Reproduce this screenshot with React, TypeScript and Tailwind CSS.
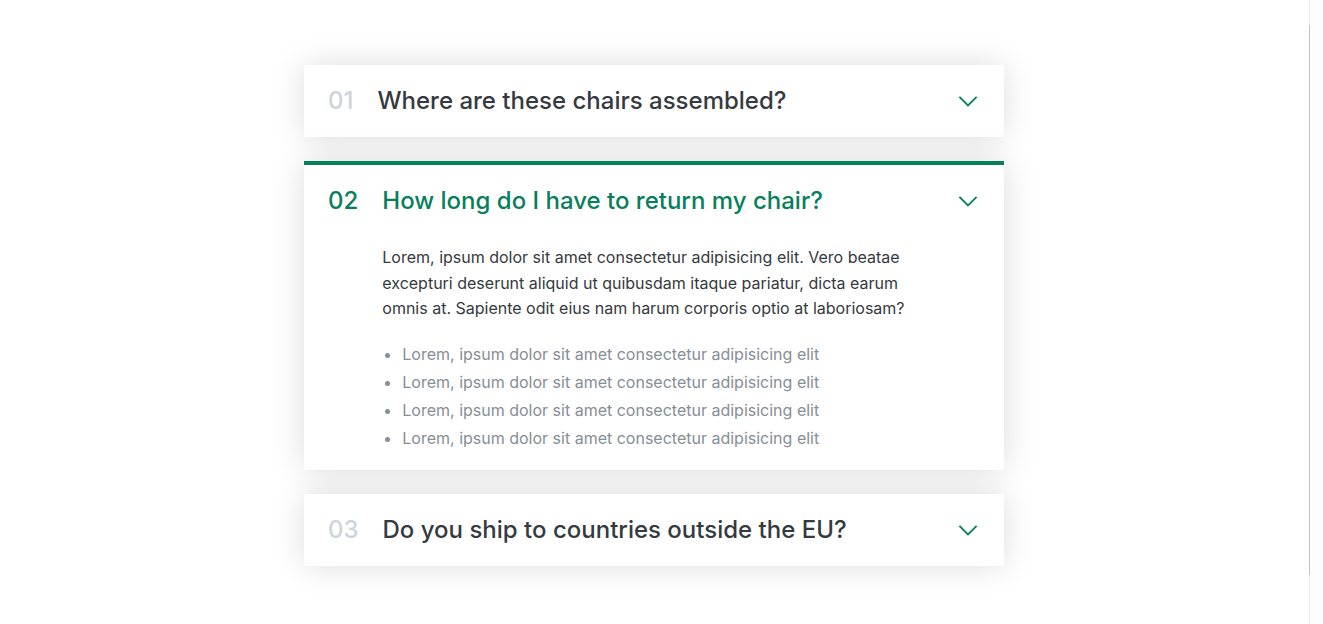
import React from "react";

const items = [
  { num: "01", title: "Where are these chairs assembled?", open: false },
  { num: "02", title: "How long do I have to return my chair?", open: true },
  { num: "03", title: "Do you ship to countries outside the EU?", open: false },
];

function Chevron() {
  return (
    <svg width="24" height="24" viewBox="0 0 24 24" fill="none" stroke="#087f5b" strokeWidth="1.8" strokeLinecap="square" strokeLinejoin="miter">
      <path d="M4 8.5l8 8 8-8" />
    </svg>
  );
}

export default function App() {
  return (
    <div className="flex min-h-[624px] bg-white" style={{ fontFamily: "Inter, 'Noto Sans', sans-serif" }}>
      <main className="flex-1 pr-px pt-[65px] pb-[58px]">
        <div className="mx-auto flex w-[700px] flex-col gap-6">
          {items.map((it) => (
            <div
              key={it.num}
              className={
                "grid grid-cols-[auto_1fr_auto] items-center gap-x-6 bg-white px-6 pt-6 shadow-[0_0_32px_rgba(0,0,0,0.14)] " +
                (it.open ? "border-t-4 border-[#087f5b] pb-[18px]" : "pb-6")
              }
            >
              <p className={"text-[24px] font-medium leading-6 " + (it.open ? "text-[#087f5b]" : "text-[#ced4da]")}>{it.num}</p>
              <p className={"text-[24px] font-medium leading-6 " + (it.open ? "text-[#087f5b]" : "text-[#343a40]")}>{it.title}</p>
              <Chevron />
              {it.open && (
                <div className="col-start-2 mt-8">
                  <p className="text-[16px] leading-[1.6] text-[#343a40]">
                    Lorem, ipsum dolor sit amet consectetur adipisicing elit. Vero beatae excepturi deserunt aliquid ut quibusdam itaque pariatur, dicta earum omnis at. Sapiente odit eius nam harum corporis optio at laboriosam?
                  </p>
                  <ul className="ml-5 mt-[18px] list-disc text-[16px] leading-[28px] text-[#868e96]">
                    <li>Lorem, ipsum dolor sit amet consectetur adipisicing elit</li>
                    <li>Lorem, ipsum dolor sit amet consectetur adipisicing elit</li>
                    <li>Lorem, ipsum dolor sit amet consectetur adipisicing elit</li>
                    <li>Lorem, ipsum dolor sit amet consectetur adipisicing elit</li>
                  </ul>
                </div>
              )}
            </div>
          ))}
        </div>
      </main>
      <div className="flex w-[14px] flex-col bg-[#fdfdfd]">
        <div className="h-[25px] border-l border-[#ececec]" />
        <div className="flex-1 border-l border-[#c1c1c1]" />
        <div className="h-[49px] border-l border-[#ececec]" />
      </div>
    </div>
  );
}
